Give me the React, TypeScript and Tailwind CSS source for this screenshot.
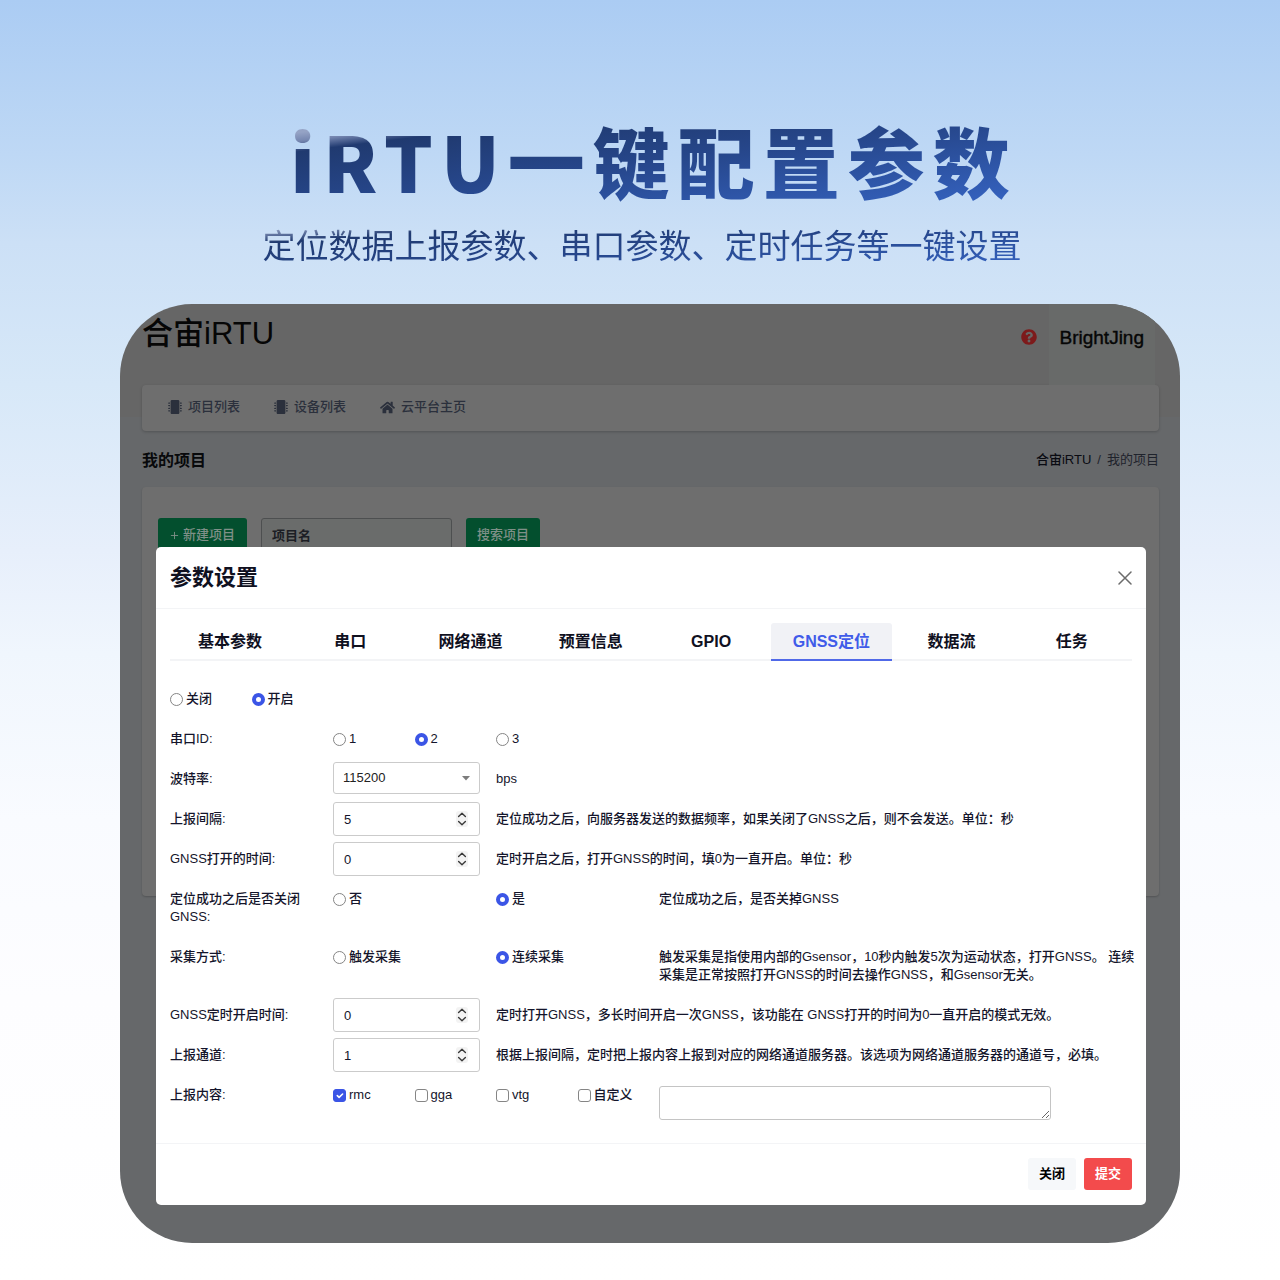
import type { ReactNode } from "react";
import { FaHome, FaMicrochip, FaQuestionCircle } from "react-icons/fa";

const tabs = ["基本参数", "串口", "网络通道", "预置信息", "GPIO", "GNSS定位", "数据流", "任务"];
const activeTab = "GNSS定位";

const Field = ({ label, htmlFor, children }: { label: string; htmlFor?: string; children: ReactNode }) => (
  <div className="grid grid-cols-12 items-start gap-x-4">
    {htmlFor ? (
      <label htmlFor={htmlFor} className="col-span-2 py-2">
        {label}
      </label>
    ) : (
      <span className="col-span-2 py-2">{label}</span>
    )}
    {children}
  </div>
);

type RadioProps = {
  name: string;
  label: string;
  checked?: boolean;
  wide?: boolean;
};

const Radio = ({ name, label, checked, wide }: RadioProps) => (
  <label className={`flex items-center gap-[3px] py-2 whitespace-nowrap ${wide ? "col-span-2" : "col-span-1"}`}>
    <input
      type="radio"
      name={name}
      defaultChecked={checked}
      className="size-[13px] shrink-0 appearance-none rounded-full border border-[#858585] bg-white checked:border-4 checked:border-[#3b55e6]"
    />
    {label}
  </label>
);

const Check = ({ label, checked }: { label: string; checked?: boolean }) => (
  <label className="col-span-1 flex items-center gap-[3px] py-2 whitespace-nowrap">
    <span className="grid size-[13px] shrink-0 place-items-center">
      <input
        type="checkbox"
        defaultChecked={checked}
        className="peer col-start-1 row-start-1 size-[13px] appearance-none rounded-[3px] border border-[#858585] bg-white checked:border-[#3b55e6] checked:bg-[#3b55e6]"
      />
      <svg
        viewBox="0 0 13 13"
        className="pointer-events-none invisible col-start-1 row-start-1 size-[13px] peer-checked:visible"
        fill="none"
        stroke="#fff"
        strokeWidth="1.6"
        strokeLinecap="round"
        strokeLinejoin="round"
      >
        <path d="M4.3 6.6 6.1 8.3 9.6 5" />
      </svg>
    </span>
    {label}
  </label>
);

const NumberBox = ({ id, value }: { id: string; value: number }) => (
  <div className="relative col-span-2">
    <input
      id={id}
      type="number"
      defaultValue={value}
      className="h-[34px] w-full rounded-[3px] border border-[#cbcbcb] bg-white px-[10px] [appearance:textfield] [&::-webkit-inner-spin-button]:appearance-none"
    />
    <svg
      viewBox="0 0 12 16"
      className="pointer-events-none absolute top-[9px] right-3 h-4 w-3"
      fill="none"
      stroke="#3a3a3a"
      strokeWidth="1.4"
      strokeLinecap="round"
      strokeLinejoin="round"
    >
      <rect width="12" height="16" rx="3" fill="#f3f3f3" stroke="none" />
      <path d="M2.6 5.4 6 2.2l3.4 3.2M2.6 10.6 6 13.8l3.4-3.2" />
    </svg>
  </div>
);

const ProjectPage = () => (
  <div className="col-start-1 row-start-1 bg-[linear-gradient(#666666_113px,#66686a_113px)] pr-[21px] pl-[22px] text-[13px]">
    <header className="flex h-[81px] items-start justify-between">
      <h2 className="pt-[7px] text-[31px] leading-[46px] font-medium text-[#060606]">合宙iRTU</h2>
      <div className="flex items-start">
        <a href="#help" aria-label="帮助" className="mt-[25px] mr-3 text-[#7d1a1b]">
          <FaQuestionCircle className="size-4" />
        </a>
        <a
          href="#user"
          className="mr-1 h-[81px] bg-[#686a69] px-[11px] pt-[20px] text-[19px] leading-7 text-[#060606] [-webkit-text-stroke:0.4px_#060606]"
        >
          BrightJing
        </a>
      </div>
    </header>
    <nav className="flex h-[46px] items-center gap-[34px] rounded bg-[#6e6e6e] px-[26px] pb-[2px] font-medium text-[#2b303c] shadow-[0_1px_3px_rgba(0,0,0,0.2)]">
      <a href="#projects" className="flex items-center gap-[6px]">
        <FaMicrochip className="size-[14px]" />
        项目列表
      </a>
      <a href="#devices" className="flex items-center gap-[6px]">
        <FaMicrochip className="size-[14px]" />
        设备列表
      </a>
      <a href="#home" className="flex items-center gap-[6px]">
        <FaHome className="size-[15px]" />
        云平台主页
      </a>
    </nav>
    <div className="flex h-[56px] items-center justify-between pt-[2px]">
      <h3 className="pt-[2px] text-base font-bold text-[#08090b]">我的项目</h3>
      <div className="flex gap-[6px] text-[#1f232c]">
        <a href="#home" className="font-medium text-[#0a0b12]">
          合宙iRTU
        </a>
        <span>/</span>
        <span>我的项目</span>
      </div>
    </div>
    <section className="h-[409px] rounded bg-[#6e6e6e] p-4 pt-[31px] shadow-[0_1px_2px_rgba(0,0,0,0.2)]">
      <div className="flex gap-[14px]">
        <button className="flex h-[34px] items-center gap-1 rounded-[3px] bg-[#034f2e] px-3 font-medium text-[#7f9088]">
          <svg viewBox="0 0 10 10" className="size-[9px]" stroke="currentColor">
            <path d="M5 1v8M1 5h8" />
          </svg>
          新建项目
        </button>
        <input
          aria-label="项目名"
          placeholder="项目名"
          className="h-[34px] w-[191px] rounded-[3px] border border-[#4d4f50] bg-[#6a6c6b] px-[10px] font-bold placeholder:text-[#1c1e24]"
        />
        <button className="h-[34px] rounded-[3px] bg-[#034f2e] px-[11px] font-medium text-[#7f9088]">搜索项目</button>
      </div>
    </section>
  </div>
);

const SettingsDialog = () => (
  <div
    role="dialog"
    aria-label="参数设置"
    className="col-start-1 row-start-1 mt-[243px] mr-[34px] mb-[38px] ml-9 rounded-[5px] bg-white text-[13px] leading-[18px] font-medium text-[#14152b]"
  >
    <div className="flex h-[62px] items-center justify-between border-b border-[#f3f4f6] px-[14px]">
      <h2 className="text-[22px] font-bold text-[#10111f]">参数设置</h2>
      <button aria-label="关闭">
        <svg viewBox="0 0 14 14" className="size-[14px]" stroke="#6b6b6b" strokeWidth="1.5" strokeLinecap="round">
          <path d="M1 1l12 12M13 1L1 13" />
        </svg>
      </button>
    </div>

    <div className="px-[14px] pt-[14px]">
      <div role="tablist" className="grid grid-cols-8 border-b-2 border-[#f3f4f6]">
        {tabs.map((tab) => (
          <button
            key={tab}
            role="tab"
            aria-selected={tab === activeTab}
            className={`-mb-[2px] h-[38px] rounded-t-[3px] border-b-2 pt-[2px] text-base font-bold ${
              tab === activeTab ? "border-[#5069e8] bg-[#f1f2f6] text-[#405be9]" : "border-transparent text-[#10111f]"
            }`}
          >
            {tab}
          </button>
        ))}
      </div>

      <form className="flex flex-col gap-[6px] pt-[21px] pb-[23px]">
        <div className="grid grid-cols-12 gap-x-4">
          <Radio name="gnss" label="关闭" />
          <Radio name="gnss" label="开启" checked />
        </div>
        <Field label="串口ID:">
          <Radio name="uart" label="1" />
          <Radio name="uart" label="2" checked />
          <Radio name="uart" label="3" />
        </Field>
        <Field label="波特率:" htmlFor="baud">
          <div className="relative col-span-2">
            <select
              id="baud"
              defaultValue="115200"
              className="h-8 w-full appearance-none rounded-[3px] border border-[#cbcbcb] bg-white px-[9px] text-[#222222]"
            >
              <option>115200</option>
            </select>
            <svg viewBox="0 0 8 5" className="pointer-events-none absolute top-[14px] right-[10px] h-[5px] w-2" fill="#7d7d7d">
              <path d="M0 0h8L4 4.6z" />
            </svg>
          </div>
          <span className="col-span-2 py-2">bps</span>
        </Field>
        <Field label="上报间隔:" htmlFor="interval">
          <NumberBox id="interval" value={5} />
          <p className="col-span-8 py-2">定位成功之后，向服务器发送的数据频率，如果关闭了GNSS之后，则不会发送。单位：秒</p>
        </Field>
        <Field label="GNSS打开的时间:" htmlFor="open">
          <NumberBox id="open" value={0} />
          <p className="col-span-8 py-2">定时开启之后，打开GNSS的时间，填0为一直开启。单位：秒</p>
        </Field>
        <Field label="定位成功之后是否关闭GNSS:">
          <Radio name="close" label="否" wide />
          <Radio name="close" label="是" checked wide />
          <p className="col-span-6 py-2">定位成功之后，是否关掉GNSS</p>
        </Field>
        <Field label="采集方式:">
          <Radio name="mode" label="触发采集" wide />
          <Radio name="mode" label="连续采集" checked wide />
          <p className="col-span-6 py-2 whitespace-nowrap">
            触发采集是指使用内部的Gsensor，10秒内触发5次为运动状态，打开GNSS。 连续
            <br />
            采集是正常按照打开GNSS的时间去操作GNSS，和Gsensor无关。
          </p>
        </Field>
        <Field label="GNSS定时开启时间:" htmlFor="timer">
          <NumberBox id="timer" value={0} />
          <p className="col-span-8 py-2">定时打开GNSS，多长时间开启一次GNSS，该功能在 GNSS打开的时间为0一直开启的模式无效。</p>
        </Field>
        <Field label="上报通道:" htmlFor="channel">
          <NumberBox id="channel" value={1} />
          <p className="col-span-8 py-2">根据上报间隔，定时把上报内容上报到对应的网络通道服务器。该选项为网络通道服务器的通道号，必填。</p>
        </Field>
        <Field label="上报内容:">
          <Check label="rmc" checked />
          <Check label="gga" />
          <Check label="vtg" />
          <Check label="自定义" />
          <textarea
            aria-label="自定义内容"
            className="col-span-5 mt-2 h-[34px] resize rounded-[3px] border border-[#c4c4c4] bg-white px-2 py-1"
          />
        </Field>
      </form>
    </div>

    <div className="flex h-[62px] items-center justify-end gap-2 border-t border-[#f3f4f6] px-[14px] pb-[2px] font-bold">
      <button className="h-8 rounded-[3px] bg-[#f6f8fa] px-[11px] text-black">关闭</button>
      <button className="h-8 rounded-[3px] bg-[#f34b4c] px-[11px] text-white">提交</button>
    </div>
  </div>
);

const App = () => {
  return (
    <main className="min-h-screen bg-[linear-gradient(#abccf3,#bed8f5_12%,#cce0f6_19%,#d7e8f8_30%,#e7effb_43%,#f0f6fd_51%,#f9fbff_64%,#fdfdff_78%,#ffffff)] pt-[118px] pr-[100px] pb-[37px] pl-[120px] font-['Liberation_Sans','Noto_Sans_CJK_SC',sans-serif]">
      <div className="flex flex-col items-center font-['Noto_Sans_CJK_SC',sans-serif]">
        <h1 className="ml-2 bg-[linear-gradient(173deg,#95a3c5_9%,#7586b0_14%,#203a70_20%,#26468a_50%,#3461bd_97%)] bg-clip-text text-[77px] leading-[84px] font-black tracking-[8px] whitespace-nowrap text-transparent">
          iRTU一键配置参数
        </h1>
        <p className="mt-[18px] mr-4 mb-9 bg-[linear-gradient(176deg,#95a3c5_9%,#203a70_23%,#26468a_55%,#3461bd_95%)] bg-clip-text text-[33px] leading-[48px] whitespace-nowrap text-transparent">
          定位数据上报参数、串口参数、定时任务等一键设置
        </p>
      </div>
      <div className="grid overflow-hidden rounded-[72px] bg-[#66686a]">
        <ProjectPage />
        <SettingsDialog />
      </div>
    </main>
  );
};

export default App;
